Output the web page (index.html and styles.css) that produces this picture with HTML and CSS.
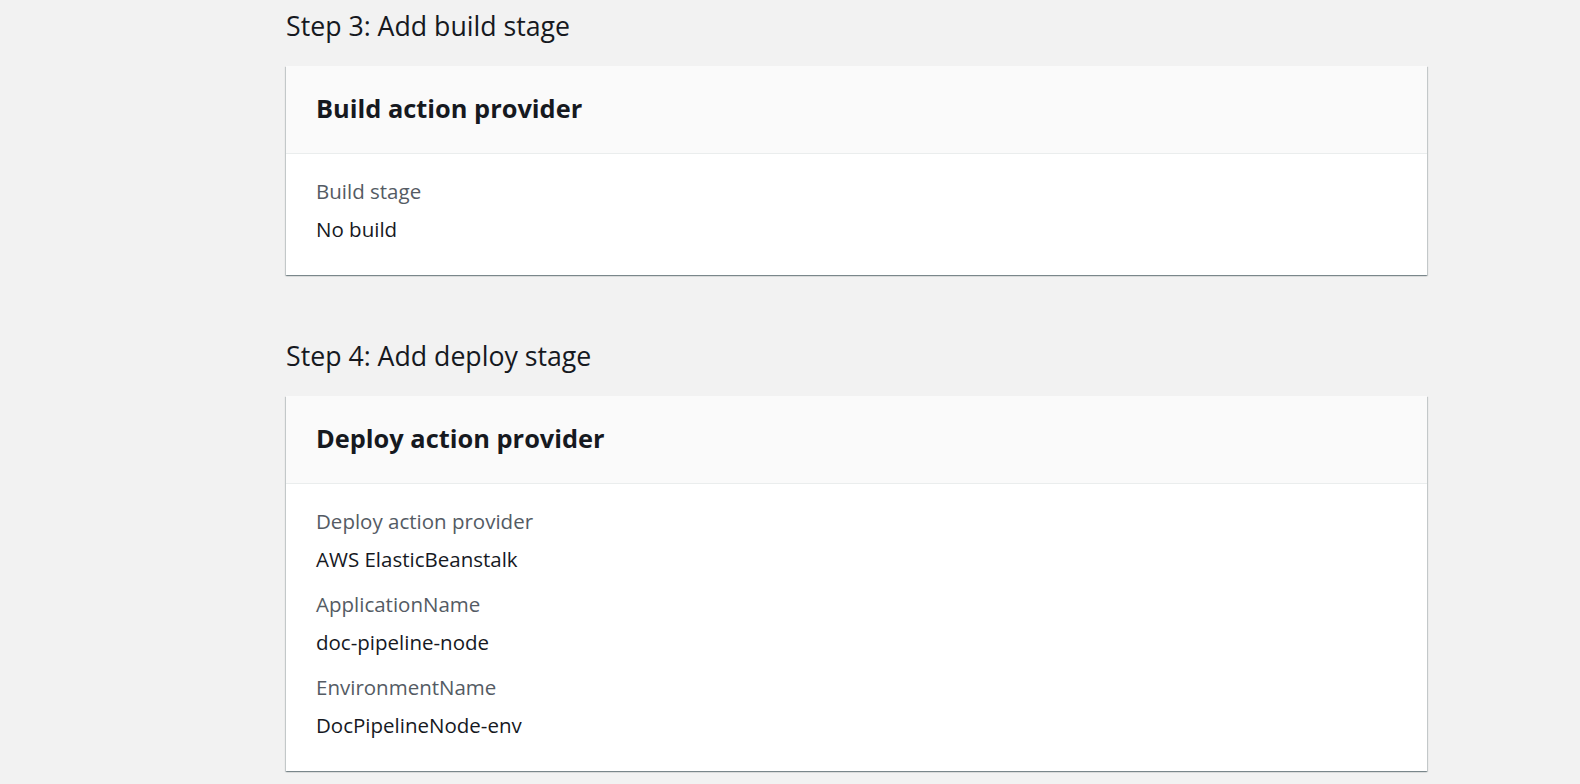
FILE: index.html
```html
<!DOCTYPE html>
<html>
<head>
<meta charset="utf-8">
<link rel="stylesheet" href="styles.css">
</head>
<body>
<main class="page">
  <section class="step">
    <h2 class="step-title">Step 3: Add build stage</h2>
    <div class="card">
      <div class="card-header"><h3>Build action provider</h3></div>
      <div class="card-body">
        <dl class="kv">
          <dt>Build stage</dt>
          <dd>No build</dd>
        </dl>
      </div>
    </div>
  </section>
  <section class="step">
    <h2 class="step-title">Step 4: Add deploy stage</h2>
    <div class="card">
      <div class="card-header"><h3>Deploy action provider</h3></div>
      <div class="card-body">
        <dl class="kv">
          <dt>Deploy action provider</dt>
          <dd>AWS ElasticBeanstalk</dd>
          <dt>ApplicationName</dt>
          <dd>doc-pipeline-node</dd>
          <dt>EnvironmentName</dt>
          <dd>DocPipelineNode-env</dd>
        </dl>
      </div>
    </div>
  </section>
</main>
</body>
</html>
```

FILE: styles.css
```css
* { box-sizing: border-box; }
html, body { margin: 0; padding: 0; }
body {
  background: #f2f2f2;
  font-family: "Open Sans", "Noto Sans", sans-serif;
  color: #16191f;
  height: 784px;
  overflow: hidden;
}
.page {
  padding-top: 8px;
  padding-left: 286px;
  width: 1427px;
  display: flex;
  flex-direction: column;
  gap: 63px;
}
.step { display: flex; flex-direction: column; }
.step-title {
  margin: 0 0 22px;
  font-size: 26.7px;
  font-weight: 400;
  line-height: 36px;
  color: #16191f;
}
.card {
  background: #fff;
  box-shadow: 0 1px 1px 0 rgba(0,28,36,.3), 1px 1px 1px 0 rgba(0,28,36,.15), -1px 1px 1px 0 rgba(0,28,36,.15);
}
.card-header {
  background: #fafafa;
  border-bottom: 1px solid #eaeded;
  padding: 26px 30px 29px;
}
.card-header h3 {
  margin: 0;
  font-size: 25.4px;
  font-weight: 700;
  line-height: 32px;
}
.card-body { padding: 22px 30px 31px; }
.kv { margin: 0; display: flex; flex-direction: column; }
.kv dt {
  font-size: 20.5px;
  line-height: 30px;
  color: #545b64;
}
.kv dd {
  margin: 8px 0 15px;
  font-size: 20.5px;
  line-height: 30px;
  color: #16191f;
}
.kv dd:last-child { margin-bottom: 0; }
```
